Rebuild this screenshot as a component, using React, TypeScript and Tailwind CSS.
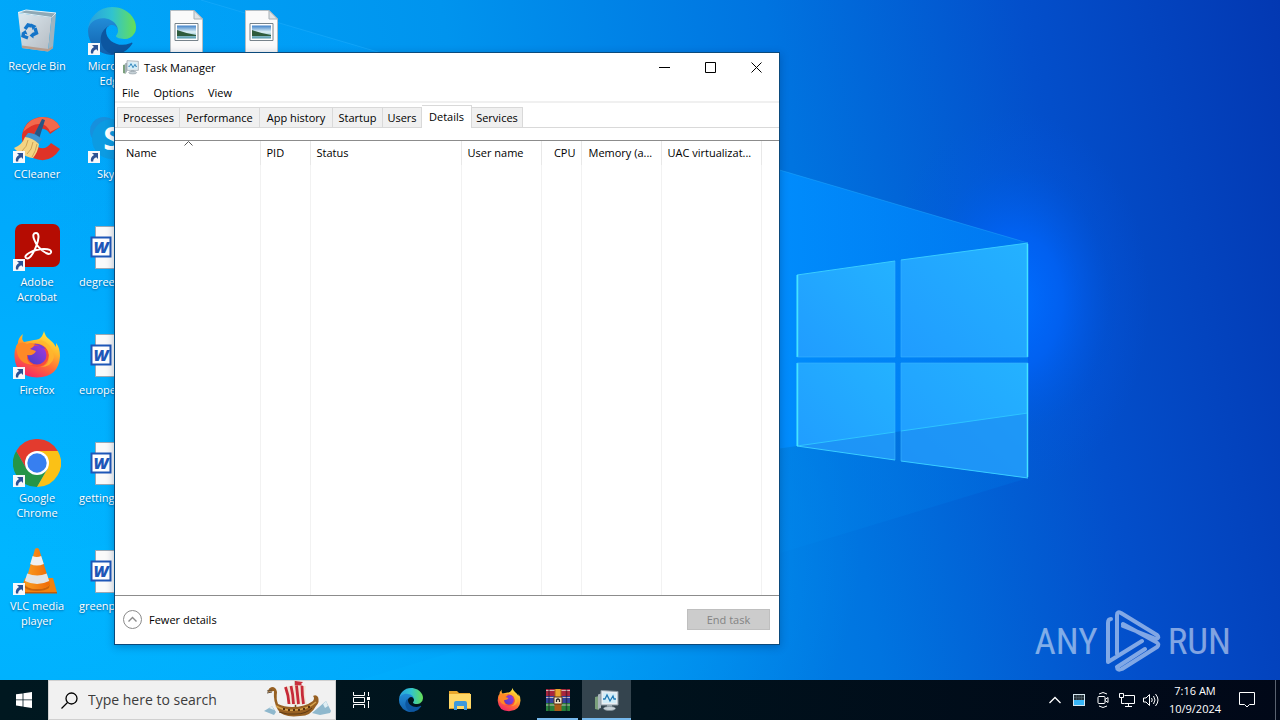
import type { ReactNode } from "react";
import clsx from "clsx";

interface DesktopItem {
  label: string;
  icon: ReactNode;
  shortcut?: boolean;
  file?: boolean;
}

const TABS = [
  { label: "Processes", width: "w-[63px]" },
  { label: "Performance", width: "w-[80px]" },
  { label: "App history", width: "w-[73px]" },
  { label: "Startup", width: "w-[50px]" },
  { label: "Users", width: "w-[39px]" },
  { label: "Details", width: "w-[50px]", active: true },
  { label: "Services", width: "w-[51px]" },
];

const COLUMNS = [
  { label: "Name", width: "w-[145px]", pad: "pl-[11px]", sorted: true },
  { label: "PID", width: "w-[50px]", pad: "pl-[6px]" },
  { label: "Status", width: "w-[151px]", pad: "pl-[6px]" },
  { label: "User name", width: "w-[80px]", pad: "pl-[6px]" },
  { label: "CPU", width: "w-[40px]", pad: "pr-[5px] text-right" },
  { label: "Memory (a...", width: "w-[80px]", pad: "pl-[7px]" },
  { label: "UAC virtualizat...", width: "w-[100px]", pad: "pl-[6px]" },
];

const DESKTOP: DesktopItem[][] = [
  [
    { label: "Recycle Bin", icon: <RecycleBinIcon /> },
    { label: "CCleaner", icon: <CCleanerIcon />, shortcut: true },
    { label: "Adobe Acrobat", icon: <AcrobatIcon />, shortcut: true },
    { label: "Firefox", icon: <FirefoxIcon className="size-12" />, shortcut: true },
    { label: "Google Chrome", icon: <ChromeIcon />, shortcut: true },
    { label: "VLC media player", icon: <VlcIcon />, shortcut: true },
  ],
  [
    { label: "Microsoft Edge", icon: <EdgeIcon className="size-12" />, shortcut: true },
    { label: "Skype", icon: <SkypeIcon />, shortcut: true },
    { label: "degree", icon: <WordFileIcon />, file: true },
    { label: "europe", icon: <WordFileIcon />, file: true },
    { label: "getting", icon: <WordFileIcon />, file: true },
    { label: "greenp", icon: <WordFileIcon />, file: true },
  ],
  [{ label: "", icon: <ImageFileIcon /> }],
  [{ label: "", icon: <ImageFileIcon /> }],
];

export default function App() {
  return (
    <div className="relative isolate flex min-h-screen flex-col overflow-hidden bg-[#0078e0] font-['Open_Sans','Noto_Sans',sans-serif] text-[11px] leading-[15px]">
      <Wallpaper />
      <main className="relative min-h-[660px] flex-1">
        <div className="flex">
          {DESKTOP.map((column, i) => (
            <div key={i} className="flex w-[75px] flex-col">
              {column.map((item, j) => (
                <DesktopIcon key={j} item={item} />
              ))}
            </div>
          ))}
        </div>
        <TaskManager />
        <Watermark />
      </main>
      <Taskbar />
    </div>
  );
}

function DesktopIcon({ item }: { item: DesktopItem }) {
  return (
    <div className="flex h-[108px] flex-col items-center gap-[3px] pt-[7px] pr-px text-white">
      <div className="relative size-12">
        {item.icon}
        {item.shortcut && <ShortcutBadge />}
      </div>
      <span
        className={clsx(
          "[text-shadow:0_1px_2px_rgb(0_40_90/0.6)]",
          item.file ? "w-full pl-1 text-left" : "w-[70px] text-center",
        )}
      >
        {item.label}
      </span>
    </div>
  );
}

function TaskManager() {
  return (
    <section
      aria-label="Task Manager"
      className="absolute left-[114px] top-[52px] flex h-[593px] w-[666px] flex-col border border-[#0b4a7c] bg-white text-black shadow-[0_2px_8px_rgb(0_30_80/0.3)]"
    >
      <header className="flex h-[30px] items-center pb-0.5 pl-2">
        <TaskManagerIcon className="size-4" />
        <h1 className="flex-1 pl-[5px]">Task Manager</h1>
        <WindowButton label="Minimize">
          <path d="M0 5.5h11" />
        </WindowButton>
        <WindowButton label="Maximize">
          <path d="M.5.5h10v10H.5z" />
        </WindowButton>
        <WindowButton label="Close">
          <path d="M.5.5l10 10M10.5.5l-10 10" />
        </WindowButton>
      </header>

      <nav className="flex h-5 items-center border-b-2 border-[#f0f0f0]">
        {["File", "Options", "View"].map((name) => (
          <button key={name} type="button" className="px-[7px]">
            {name}
          </button>
        ))}
      </nav>

      <div role="tablist" className="flex h-[25px] items-end border-b border-[#d9d9d9] pl-0.5">
        {TABS.map((tab) => (
          <button
            key={tab.label}
            type="button"
            role="tab"
            aria-selected={Boolean(tab.active)}
            className={clsx(
              "shrink-0 whitespace-nowrap border-t border-r border-[#d9d9d9]",
              tab.width,
              tab.active ? "-mb-px h-[23px] bg-white pb-0.5" : "h-5 bg-[#f0f0f0] first:border-l",
            )}
          >
            {tab.label}
          </button>
        ))}
      </div>

      <div className="mt-3 flex flex-1 border-y border-[#8c8c8c]">
        <table className="h-full w-full table-fixed border-collapse">
          <thead>
            <tr className="h-6">
              {COLUMNS.map((column) => (
                <th
                  key={column.label}
                  scope="col"
                  className={clsx(
                    "relative whitespace-nowrap border-r border-[#e8e8e8] pb-0.5 text-left font-normal",
                    column.width,
                    column.pad,
                  )}
                >
                  {column.label}
                  {column.sorted && (
                    <svg
                      viewBox="0 0 9 5"
                      className="absolute left-[69px] top-0 h-[5px] w-[9px] fill-none stroke-[#555]"
                    >
                      <path d="M.5 4.5l4-4 4 4" />
                    </svg>
                  )}
                </th>
              ))}
              <td />
            </tr>
          </thead>
          <tbody>
            <tr>
              {COLUMNS.map((column) => (
                <td key={column.label} className="border-r border-[#f2f2f2]" />
              ))}
              <td />
            </tr>
          </tbody>
        </table>
      </div>

      <footer className="flex h-12 items-center justify-between pb-0.5 pl-2 pr-[9px]">
        <button type="button" className="flex items-center gap-[7px]">
          <svg viewBox="0 0 19 19" className="size-[19px] fill-none stroke-[#8a8a8a]">
            <circle cx="9.5" cy="9.5" r="9" />
            <path d="M5.5 11.5l4-4 4 4" strokeWidth="1.4" />
          </svg>
          Fewer details
        </button>
        <button
          type="button"
          disabled
          className="h-[21px] w-[83px] border border-[#bfbfbf] bg-[#cccccc] text-[#838383]"
        >
          End task
        </button>
      </footer>
    </section>
  );
}

function WindowButton({ label, children }: { label: string; children: ReactNode }) {
  return (
    <button type="button" aria-label={label} className="flex h-7 w-[46px] items-center justify-center self-start">
      <svg viewBox="0 0 11 11" className="size-[11px] fill-none stroke-black">
        {children}
      </svg>
    </button>
  );
}

function Taskbar() {
  return (
    <footer className="relative flex h-10 items-stretch bg-linear-to-r from-[#001820] via-[#00121c] to-[#010818] text-white">
      <button type="button" aria-label="Start" className="flex w-12 items-center justify-center">
        <svg viewBox="0 0 16 16" className="size-4 fill-white">
          <path d="M0 2.3L6.6 1.4V7.5H0zM7.4 1.3L16 0v7.5H7.4zM0 8.3h6.6v6.2L0 13.6zM7.4 8.3H16V16L7.4 14.7z" />
        </svg>
      </button>

      <label className="flex w-[288px] items-center border border-[#d0d0d0] bg-[#f1f1f1] pl-3 pr-[3px] text-black">
        <svg viewBox="0 0 17 17" className="size-[17px] fill-none stroke-black stroke-[1.3]">
          <circle cx="10.5" cy="6.5" r="5.5" />
          <path d="M6.5 10.5L.5 16.5" />
        </svg>
        <input
          type="text"
          aria-label="Search"
          placeholder="Type here to search"
          className="min-w-0 flex-1 bg-transparent pl-[10px] text-[14px] leading-5 outline-none placeholder:text-[#3c3c3c]"
        />
        <Longship />
      </label>

      <button type="button" aria-label="Task View" className="flex w-[50px] items-center justify-center">
        <svg viewBox="0 0 17 16" className="h-4 w-[17px] fill-none stroke-white">
          <path d="M.5 0v3.500h11V0M.5 16v-3.500h11V16M.5 5.500h11v5H.5zM15.500 0v4M15.500 9v7" />
          <path d="M14 5h3v3h-3z" className="fill-white stroke-none" />
        </svg>
      </button>
      <TaskbarApp label="Microsoft Edge">
        <EdgeIcon className="size-6" />
      </TaskbarApp>
      <TaskbarApp label="File Explorer">
        <FolderIcon />
      </TaskbarApp>
      <TaskbarApp label="Firefox">
        <FirefoxIcon className="size-6" />
      </TaskbarApp>
      <TaskbarApp label="WinRAR" state="open">
        <WinRarIcon />
      </TaskbarApp>
      <TaskbarApp label="Task Manager" state="focused">
        <TaskManagerIcon className="size-6" />
      </TaskbarApp>

      <div className="ml-auto flex items-stretch">
        <TrayButton label="Show hidden icons">
          <path d="M2.500 11l5.500-5.500 5.500 5.500" strokeWidth="1.300" />
        </TrayButton>
        <TrayButton label="Activity">
          <path d="M2 2h12v12H2z" className="fill-[#d5e6ee] stroke-none" />
          <path d="M3 3h10v5H3z" className="fill-[#26323a] stroke-none" />
          <path d="M3 8h10v5H3z" className="fill-[#38b4f4] stroke-none" />
          <path d="M3 5.500h10M5.500 3v5M8 3v5M10.500 3v5" className="stroke-[#586871] stroke-[0.5]" />
        </TrayButton>
        <TrayButton label="Meet Now">
          <rect x="3" y="4.500" width="7" height="7" rx="1" />
          <path d="M10 7.500l3-2v5l-3-2M4 2Q8-1 12 2M4 14q4 3 8 0" />
        </TrayButton>
        <TrayButton label="Network">
          <path d="M5.500 3.500h10v8h-10M9.500 11.500v3M6 14.500h7M.5 1.500h4v4h-4zM2.500 5.500v6h3" />
        </TrayButton>
        <TrayButton label="Volume">
          <path d="M.5 6h2.500l3.500-3.500v11L3 10H.5zM8.500 6q1.500 2 0 4M10.500 4q3 4 0 8M12.500 2q5 6 0 12" />
        </TrayButton>
        <button type="button" className="w-[64px] text-center leading-[18px]">
          7:16 AM
          <br />
          10/9/2024
        </button>
        <button type="button" aria-label="Notifications" className="flex w-10 items-center justify-center">
          <svg viewBox="0 0 16 16" className="size-4 fill-none stroke-white">
            <path d="M.5.5h15v12h-5L8 15l-2.500-2.500h-5z" />
          </svg>
        </button>
        <button type="button" aria-label="Show desktop" className="ml-2 w-[5px] border-l border-[#5a6270]" />
      </div>
    </footer>
  );
}

function TaskbarApp({
  label,
  state,
  children,
}: {
  label: string;
  state?: "open" | "focused";
  children: ReactNode;
}) {
  return (
    <button
      type="button"
      aria-label={label}
      className={clsx(
        "relative flex w-[49px] items-center justify-center",
        state === "focused" && "bg-[#34444e]",
      )}
    >
      {children}
      {state && (
        <span
          className={clsx(
            "absolute bottom-0 h-0.5 bg-[#76b9ed]",
            state === "open" ? "inset-x-1" : "inset-x-0",
          )}
        />
      )}
    </button>
  );
}

function TrayButton({ label, children }: { label: string; children: ReactNode }) {
  return (
    <button type="button" aria-label={label} className="flex w-6 items-center justify-center">
      <svg viewBox="0 0 16 16" className="size-4 overflow-visible fill-none stroke-white">
        {children}
      </svg>
    </button>
  );
}

function Watermark() {
  return (
    <div className="absolute bottom-2 right-[49px] flex h-[62px] items-center gap-[7px] text-[37px] leading-none text-white/50 font-['Roboto_Condensed','Open_Sans_Condensed','Liberation_Sans_Narrow',sans-serif]">
      <span>ANY</span>
      <svg
        viewBox="0 0 56 62"
        className="h-[62px] w-[56px] fill-none stroke-current stroke-4"
        strokeLinejoin="round"
        strokeLinecap="round"
      >
        <path d="M6 9Q3 9 3 13V52l34-21M12 44V5q0-4 4-2l36 22q3 3-1 4L18 16M12 57q0 4 5 2l35-22q3-3-1-5L18 14M12 57l28-18" />
      </svg>
      <span>RUN</span>
    </div>
  );
}

function Wallpaper() {
  return (
    <svg
      viewBox="0 0 1280 720"
      preserveAspectRatio="xMidYMid slice"
      className="absolute inset-0 -z-10 h-full w-full"
    >
      <defs>
        <linearGradient id="sky" x1="0" y1="0.1" x2="1" y2="0">
          <stop offset="0" stopColor="#00a8fa" />
          <stop offset="0.35" stopColor="#0094ee" />
          <stop offset="0.6" stopColor="#0074e0" />
          <stop offset="0.8" stopColor="#034fcb" />
          <stop offset="1" stopColor="#0338b2" />
        </linearGradient>
        <linearGradient id="beam">
          <stop offset="0" stopColor="#00b0ff" stopOpacity="0" />
          <stop offset="0.3" stopColor="#00a0fc" stopOpacity="0.3" />
          <stop offset="0.75" stopColor="#008eff" stopOpacity="0.9" />
          <stop offset="1" stopColor="#007cf4" stopOpacity="0.8" />
        </linearGradient>
        <linearGradient id="lowBeam">
          <stop offset="0" stopColor="#00b0ff" stopOpacity="0" />
          <stop offset="0.6" stopColor="#009af4" stopOpacity="0.4" />
          <stop offset="1" stopColor="#0068dc" stopOpacity="0.6" />
        </linearGradient>
        <radialGradient id="glow">
          <stop offset="0" stopColor="#006eff" />
          <stop offset="0.35" stopColor="#0066ff" stopOpacity="0.7" />
          <stop offset="0.7" stopColor="#005cec" stopOpacity="0.2" />
          <stop offset="1" stopColor="#0058e8" stopOpacity="0" />
        </radialGradient>
        <radialGradient id="floor">
          <stop offset="0" stopColor="#00b6ff" />
          <stop offset="0.5" stopColor="#00b0ff" stopOpacity="0.8" />
          <stop offset="1" stopColor="#00a8ff" stopOpacity="0" />
        </radialGradient>
        <linearGradient id="pane" x1="0" y1="1" x2="1" y2="0">
          <stop offset="0" stopColor="#209cff" />
          <stop offset="1" stopColor="#24b2ff" />
        </linearGradient>
        <linearGradient id="edgeTop">
          <stop offset="0" stopColor="#279fe0" />
          <stop offset="0.5" stopColor="#30c3d0" />
          <stop offset="1" stopColor="#66df55" />
        </linearGradient>
        <linearGradient id="edgeMid" x1="0" y1="0" x2="0" y2="1">
          <stop offset="0" stopColor="#238fda" />
          <stop offset="1" stopColor="#115fab" />
        </linearGradient>
        <linearGradient id="foxBody" x1="0.8" y1="0" x2="0.3" y2="1">
          <stop offset="0" stopColor="#fff044" />
          <stop offset="0.35" stopColor="#ffb52c" />
          <stop offset="0.65" stopColor="#ff6b38" />
          <stop offset="1" stopColor="#f42468" />
        </linearGradient>
        <linearGradient id="foxCore" x1="0" y1="1" x2="1" y2="0">
          <stop offset="0" stopColor="#463fc4" />
          <stop offset="1" stopColor="#a338df" />
        </linearGradient>
        <linearGradient id="binFront" x1="0" y1="0" x2="1" y2="1">
          <stop offset="0" stopColor="#dce9f0" />
          <stop offset="1" stopColor="#b5bbc2" />
        </linearGradient>
        <linearGradient id="cone">
          <stop offset="0" stopColor="#fa9c20" />
          <stop offset="1" stopColor="#ef6a06" />
        </linearGradient>
        <linearGradient id="photo" x1="0" y1="0" x2="0" y2="1">
          <stop offset="0" stopColor="#3e80c8" />
          <stop offset="0.5" stopColor="#e0f2f6" />
          <stop offset="1" stopColor="#4e96a8" />
        </linearGradient>
      </defs>

      <path d="M0 0H1280V720H0z" fill="url(#sky)" />
      <ellipse cx="1015" cy="300" rx="135" ry="190" fill="url(#glow)" />
      <ellipse cx="0" cy="560" rx="860" ry="460" fill="url(#floor)" />
      <path d="M1028 243L201 0H0v720h228l800-242z" fill="url(#lowBeam)" />
      <path d="M1028 243L201 0H0v560l797-114 231-33z" fill="url(#beam)" />
      <path d="M201 0l827 243" stroke="#2eb4ff" strokeOpacity="0.35" />

      <g fill="url(#pane)">
        <path d="M797 275l98-14v96h-98z" />
        <path d="M901 260l127-17v114H901z" />
        <path d="M797 363h98v97l-98-14z" />
        <path d="M901 363h127v115l-127-17z" />
      </g>
      <path d="M797 446l98-14v28zM901 431l127-18v65l-127-17z" fill="#1c8ff4" opacity="0.7" />
      <path d="M797 446l98-14M901 431l127-18" stroke="#2dc4ff" />
      <path
        d="M797 357v-82l98-14M901 260l127-17M797 363v83l98 14M901 461l127 17"
        fill="none"
        stroke="#38ccff"
      />
      <path d="M797.500 275v82M797.500 363v83M1027.500 244v113M1027.500 363v114" stroke="#44e4ff" strokeWidth="1.500" />
      <path d="M797 357h98V261M901 260v97h127M797 363h98v97M901 461v-98h127" fill="none" stroke="#38b4ff" strokeOpacity="0.6" />
    </svg>
  );
}

function ShortcutBadge() {
  return (
    <svg viewBox="0 0 12 12" className="absolute bottom-0 left-0 size-3">
      <path d="M0 0h12v12H0z" fill="#f6f8fb" />
      <path d="M4 2h6v6L8.300 6.300Q5 7.500 5.200 10.500H3Q2 6 6 4z" fill="#2c5294" />
    </svg>
  );
}

function RecycleBinIcon() {
  return (
    <svg viewBox="0 0 48 48" className="size-12">
      <path d="M5 5.500L13 3l30 3-4.500 4.500z" fill="#8fa9b6" stroke="#e5f3f8" />
      <path d="M5 6l33.500 4.500L35 44.500 9 41z" fill="url(#binFront)" />
      <path d="M38.500 10.500L43 6.500 40 41l-5 3.500z" fill="#9eb4c0" />
      <path d="M9 38.500l26 3.500 5-3-.3 2.500-4.700 3L9 41z" fill="#b79c8c" />
      <g fill="none" stroke="#1474c8" strokeWidth="3.400">
        <path d="M12 22l3-4 4 1M22 21l1.500 5-4 2M15 31l-5-2 .5-3" />
      </g>
      <path d="M18 16.500l5.500 2.500-4 4zM20.500 25v6.500l-4-3zM8.500 26l4-3 2 4.500z" fill="#1474c8" />
    </svg>
  );
}

function CCleanerIcon() {
  return (
    <svg viewBox="0 0 48 48" className="size-12">
      <path
        d="M47 12Q41 1 28 2 12 4 9 20q-1 16 11 23 17 7 27-9l-9-6q-6 8-13 4-6-5-4-12 3-8 10-6 4 1 6 5z"
        fill="#df3327"
      />
      <path d="M47 12Q41 1 28 2 14 4 10 17q10-9 17-8 7 0 10 8z" fill="#f2694c" />
      <path d="M29 4l3 1-6 19-6-2z" fill="#275684" />
      <path d="M15 18q6-1 14 6l-4 5-13-7z" fill="#4094d0" />
      <path d="M12 22q8 1 14 7-1 8-6 14-7-1-10-4-5-1-9-6 8-3 11-11z" fill="#f4d483" />
      <path d="M15 25q-1 7-6 11M20 27q-1 8-6 12M24 29q-1 7-5 13" fill="none" stroke="#cda356" />
    </svg>
  );
}

function AcrobatIcon() {
  return (
    <svg viewBox="0 0 48 48" className="size-12">
      <rect x="2" y="1" width="45" height="43" rx="7" fill="#b50c02" />
      <path
        d="M23 10q-4 0-2 6 3 9 12 14 4 2 5-.5 1-3.500-7-3.500-8 0-15 4-5 3-3 5 3 2 7-5 5-9 5.500-16 0-4-2.500-4z"
        fill="none"
        stroke="#fff"
        strokeWidth="2"
      />
    </svg>
  );
}

function FirefoxIcon({ className }: { className: string }) {
  return (
    <svg viewBox="0 0 48 48" className={className}>
      <path
        d="M31 0q-1 5-5 8-3 1-5 1L11 11Q8 8 10 3 5 7 5 12 1 18 1.500 26 3 46 24 46.500 46 46 47 25q0-8-4-13v4Q40 11 36 8 32 5 31 0z"
        fill="url(#foxBody)"
      />
      <path d="M12 16l12-4q11 2 12 12-1 11-12 12-13-1-15-13z" fill="#fb4b39" />
      <circle cx="24" cy="24" r="9.500" fill="url(#foxCore)" />
      <path d="M3 15Q9 9 14 13q4-2 8 0-1 3-5 5l6 2q-2 5-9 4-1 7 6 10-14-1-16-13z" fill="#ff8926" />
      <path d="M22 13q14 0 14 14-1 8-9 9 12 0 14-10Q39 12 28 9z" fill="#ffb62d" opacity="0.8" />
      <path d="M20 13q8-1 13 5-3-1-5-1-1-3-8-4z" fill="#7542d4" />
    </svg>
  );
}

function ChromeIcon() {
  return (
    <svg viewBox="0 0 48 48" className="size-12">
      <path d="M3.200 12A24 24 0 0 0 24 48l10.400-18H13.600z" fill="#259548" />
      <path d="M24 48a24 24 0 0 0 20.800-36H24l10.400 18z" fill="#fbc116" />
      <path d="M44.800 12A24 24 0 0 0 3.200 12l10.400 18L24 12z" fill="#e33b2e" />
      <circle cx="24" cy="24" r="12" fill="#fff" />
      <circle cx="24" cy="24" r="9.700" fill="#377ff0" />
    </svg>
  );
}

function VlcIcon() {
  return (
    <svg viewBox="0 0 48 48" className="size-12">
      <path d="M12 31h28l4 14.500H7z" fill="#f3820e" />
      <path d="M7 45h37v1.500H7z" fill="#c75b05" />
      <path d="M11 37q2 5 13 5t13-5l-1 4q-4 3-12 3t-12-3z" fill="#c9620c" />
      <path d="M22 2q2-2 4 0l11 35q-4 5-13 5t-12-5z" fill="url(#cone)" />
      <path d="M19.600 9q4 2 8.600 0l2.600 8q-7 3-13.600 0z" fill="#eff0f0" />
      <path d="M14.200 26.500q10 4 19.600 0l2.400 7.500q-12 6-24.400 0z" fill="#e3e4e4" />
    </svg>
  );
}

function EdgeIcon({ className }: { className: string }) {
  return (
    <svg viewBox="0 0 256 256" className={className}>
      <g transform="translate(-4.630 -4.920)">
        <path
          d="M235.680 195.460a93.730 93.730 0 0 1-10.540 4.710 101.870 101.870 0 0 1-35.900 6.460c-47.320 0-88.540-32.550-88.540-74.320A31.480 31.480 0 0 1 117.130 105c-42.800 1.800-53.800 46.400-53.800 72.530 0 73.880 68.090 81.370 82.760 81.370 7.910 0 19.840-2.300 27-4.560l1.310-.44a128.340 128.340 0 0 0 66.600-52.800 4 4 0 0 0-5.320-5.640z"
          fill="#0c56a0"
        />
        <path
          d="M110.340 246.340A79.200 79.200 0 0 1 87.600 225a80.720 80.720 0 0 1 29.530-120c3.120-1.470 8.450-4.130 15.540-4a32.350 32.350 0 0 1 25.690 13 31.880 31.880 0 0 1 6.360 18.660c0-.21 24.460-79.600-80-79.600-43.900 0-80 41.660-80 78.210a130.150 130.150 0 0 0 12.110 56 128 128 0 0 0 156.380 67.110 75.550 75.550 0 0 1-62.780-8z"
          fill="url(#edgeMid)"
        />
        <path
          d="M156.940 153.780c-.81 1.050-3.300 2.500-3.300 5.660 0 2.610 1.700 5.120 4.720 7.230 14.380 10 41.490 8.680 41.560 8.680a59.560 59.560 0 0 0 30.270-8.350 61.380 61.380 0 0 0 30.430-52.880c.26-22.410-8-37.310-11.340-43.910-21.190-41.450-66.930-65.290-116.670-65.290a128 128 0 0 0-128 126.200c.48-36.540 36.800-66.050 80-66.050 3.500 0 23.460.34 42 10.070 16.340 8.580 24.900 18.940 30.850 29.210 6.180 10.670 7.280 24.150 7.280 29.520s-2.740 13.330-7.800 19.910z"
          fill="url(#edgeTop)"
        />
      </g>
    </svg>
  );
}

function SkypeIcon() {
  return (
    <svg viewBox="0 0 48 48" className="size-12">
      <circle cx="16" cy="16" r="14" fill="#1790dd" />
      <circle cx="32" cy="32" r="14" fill="#0a78cb" />
      <circle cx="24" cy="24" r="20" fill="#0c9be2" />
      <text x="24" y="35" textAnchor="middle" className="fill-white text-[32px] font-bold">
        S
      </text>
    </svg>
  );
}

function WordFileIcon() {
  return (
    <svg viewBox="0 0 48 48" className="size-12">
      <path d="M7.500 3.500H33l8 8v34H7.500z" fill="#fafafa" stroke="#9aa9b5" />
      <path d="M3.500 14.500h19v19h-19z" fill="#fff" stroke="#1e57b8" strokeWidth="2" />
      <text
        x="13"
        y="30"
        textAnchor="middle"
        className="fill-[#1e57b8] text-[16px] font-extrabold italic"
      >
        W
      </text>
    </svg>
  );
}

function ImageFileIcon() {
  return (
    <svg viewBox="0 0 48 48" className="size-12">
      <path d="M7.500 3.500H31l8.500 8.500v34h-32z" fill="#fafafa" stroke="#b5bec4" />
      <path d="M31 3.500V12h8.500z" fill="#dfe3e6" stroke="#a7b0b6" />
      <path d="M12 16.500h23v17H12z" fill="#fff" stroke="#77838b" />
      <path d="M14 18.500h19v13H14z" fill="url(#photo)" />
      <path d="M14 23q8 3 19 5v1H14z" fill="#2f5c3c" />
    </svg>
  );
}

function TaskManagerIcon({ className }: { className: string }) {
  return (
    <svg viewBox="0 0 24 24" className={className}>
      <path d="M0 9l4-1v14l-4-1z" fill="#7ba07c" />
      <path d="M3 6.500l3-1V20l-3 1z" fill="#a8b4ba" />
      <path d="M6 2.500l17 1v13.500H6z" fill="#e8eef2" stroke="#8b99a2" />
      <path d="M8 4.500l13 1v9.500H8z" fill="#d2edf8" />
      <path d="M8 11h2l2-4 3 6 3-5 1 3h2" fill="none" stroke="#2079b4" strokeWidth="1.300" />
      <path d="M12 17h5v2h-5z" fill="#9eabb3" />
      <ellipse cx="14.500" cy="20.500" rx="6" ry="2" fill="#c5d0d6" stroke="#7d8b94" strokeWidth="0.700" />
    </svg>
  );
}

function FolderIcon() {
  return (
    <svg viewBox="0 0 24 24" className="size-6">
      <path d="M1 3h8l2 2h11v4H1z" fill="#e9a82c" />
      <path d="M1 6h22v15H1z" fill="#ffd867" />
      <path d="M6 22v-7q0-2 2-2h9q2 0 2 2v7h-3v-4H9v4z" fill="#3c99dc" />
      <path d="M2 21h4v-1H1zM19 21h4v-1h-4z" fill="#d89b2b" />
    </svg>
  );
}

function WinRarIcon() {
  return (
    <svg viewBox="0 0 24 24" className="size-6">
      <path d="M0 1h24v7H0z" fill="#a9263e" />
      <path d="M0 8h24v7H0z" fill="#31439c" />
      <path d="M0 15h24v8H0z" fill="#26803c" />
      <path d="M0 2.500h24M0 9.500h24M0 17h24" stroke="#e9d6cf" strokeWidth="0.800" />
      <path d="M3 1v22M20.500 1v22" stroke="#180f22" strokeOpacity="0.5" strokeWidth="1.500" />
      <path d="M8.500 1h7v22h-7z" fill="#a95b18" />
      <path d="M9.500 1h5v8h-5z" fill="#eaa52e" />
      <path d="M8 9h8v7H8z" fill="#f1e7cd" stroke="#5b351a" />
      <path d="M10.500 14v-2q1.500-2 3 0v2" fill="none" stroke="#222" strokeWidth="1.300" />
    </svg>
  );
}

function Longship() {
  return (
    <svg viewBox="0 0 68 38" className="h-[38px] w-[68px] shrink-0">
      <path d="M0 30l5-3 3-2 4 6-2 3zM48 32l7-6 7-6 3 6 2 4-1 2-10 2z" fill="#8fb8cd" />
      <path d="M59 23l3-3 2 5-3 2zM5 27l3-2 2 4z" fill="#dfeef4" />
      <path d="M31.500 0v26" stroke="#70451f" strokeWidth="1.500" />
      <path d="M31 0l8 1-2 2 2 2h-8z" fill="#c9303c" />
      <path d="M20 6q11-3 22-1-2 9 1 18-9 2-19 0-1-9-4-17z" fill="#f0e4d6" />
      <path
        d="M21.500 6q3 8 3.500 17M27 5q2 8 2.500 18M32.500 4.500q1 9 2 18.500M38 5q0 9 1.500 18"
        fill="none"
        stroke="#c62a38"
        strokeWidth="2.800"
      />
      <path
        d="M4 11q0-4 4-5 4 0 5 5-1 7 1 12 6 3 14 3 13 0 21-6 2-3 0-5 3-2 5 1 2 5-2 9-5 10-16 10-17 2-22-6-5-8-4-19z"
        fill="#976022"
      />
      <path d="M3 10l5-1M3 12l5-1" stroke="#64513a" />
      <path d="M12 25q8 5 18 4 13 0 22-8" fill="none" stroke="#d6a24c" strokeWidth="1.500" />
      <path d="M15 31q8 3 17 2 10 0 16-6" fill="none" stroke="#5f3a14" />
      <path d="M20 27v2M25 28v2M30 28v2M35 28v2M40 27v2M45 25v2" stroke="#573411" strokeWidth="2" />
    </svg>
  );
}
